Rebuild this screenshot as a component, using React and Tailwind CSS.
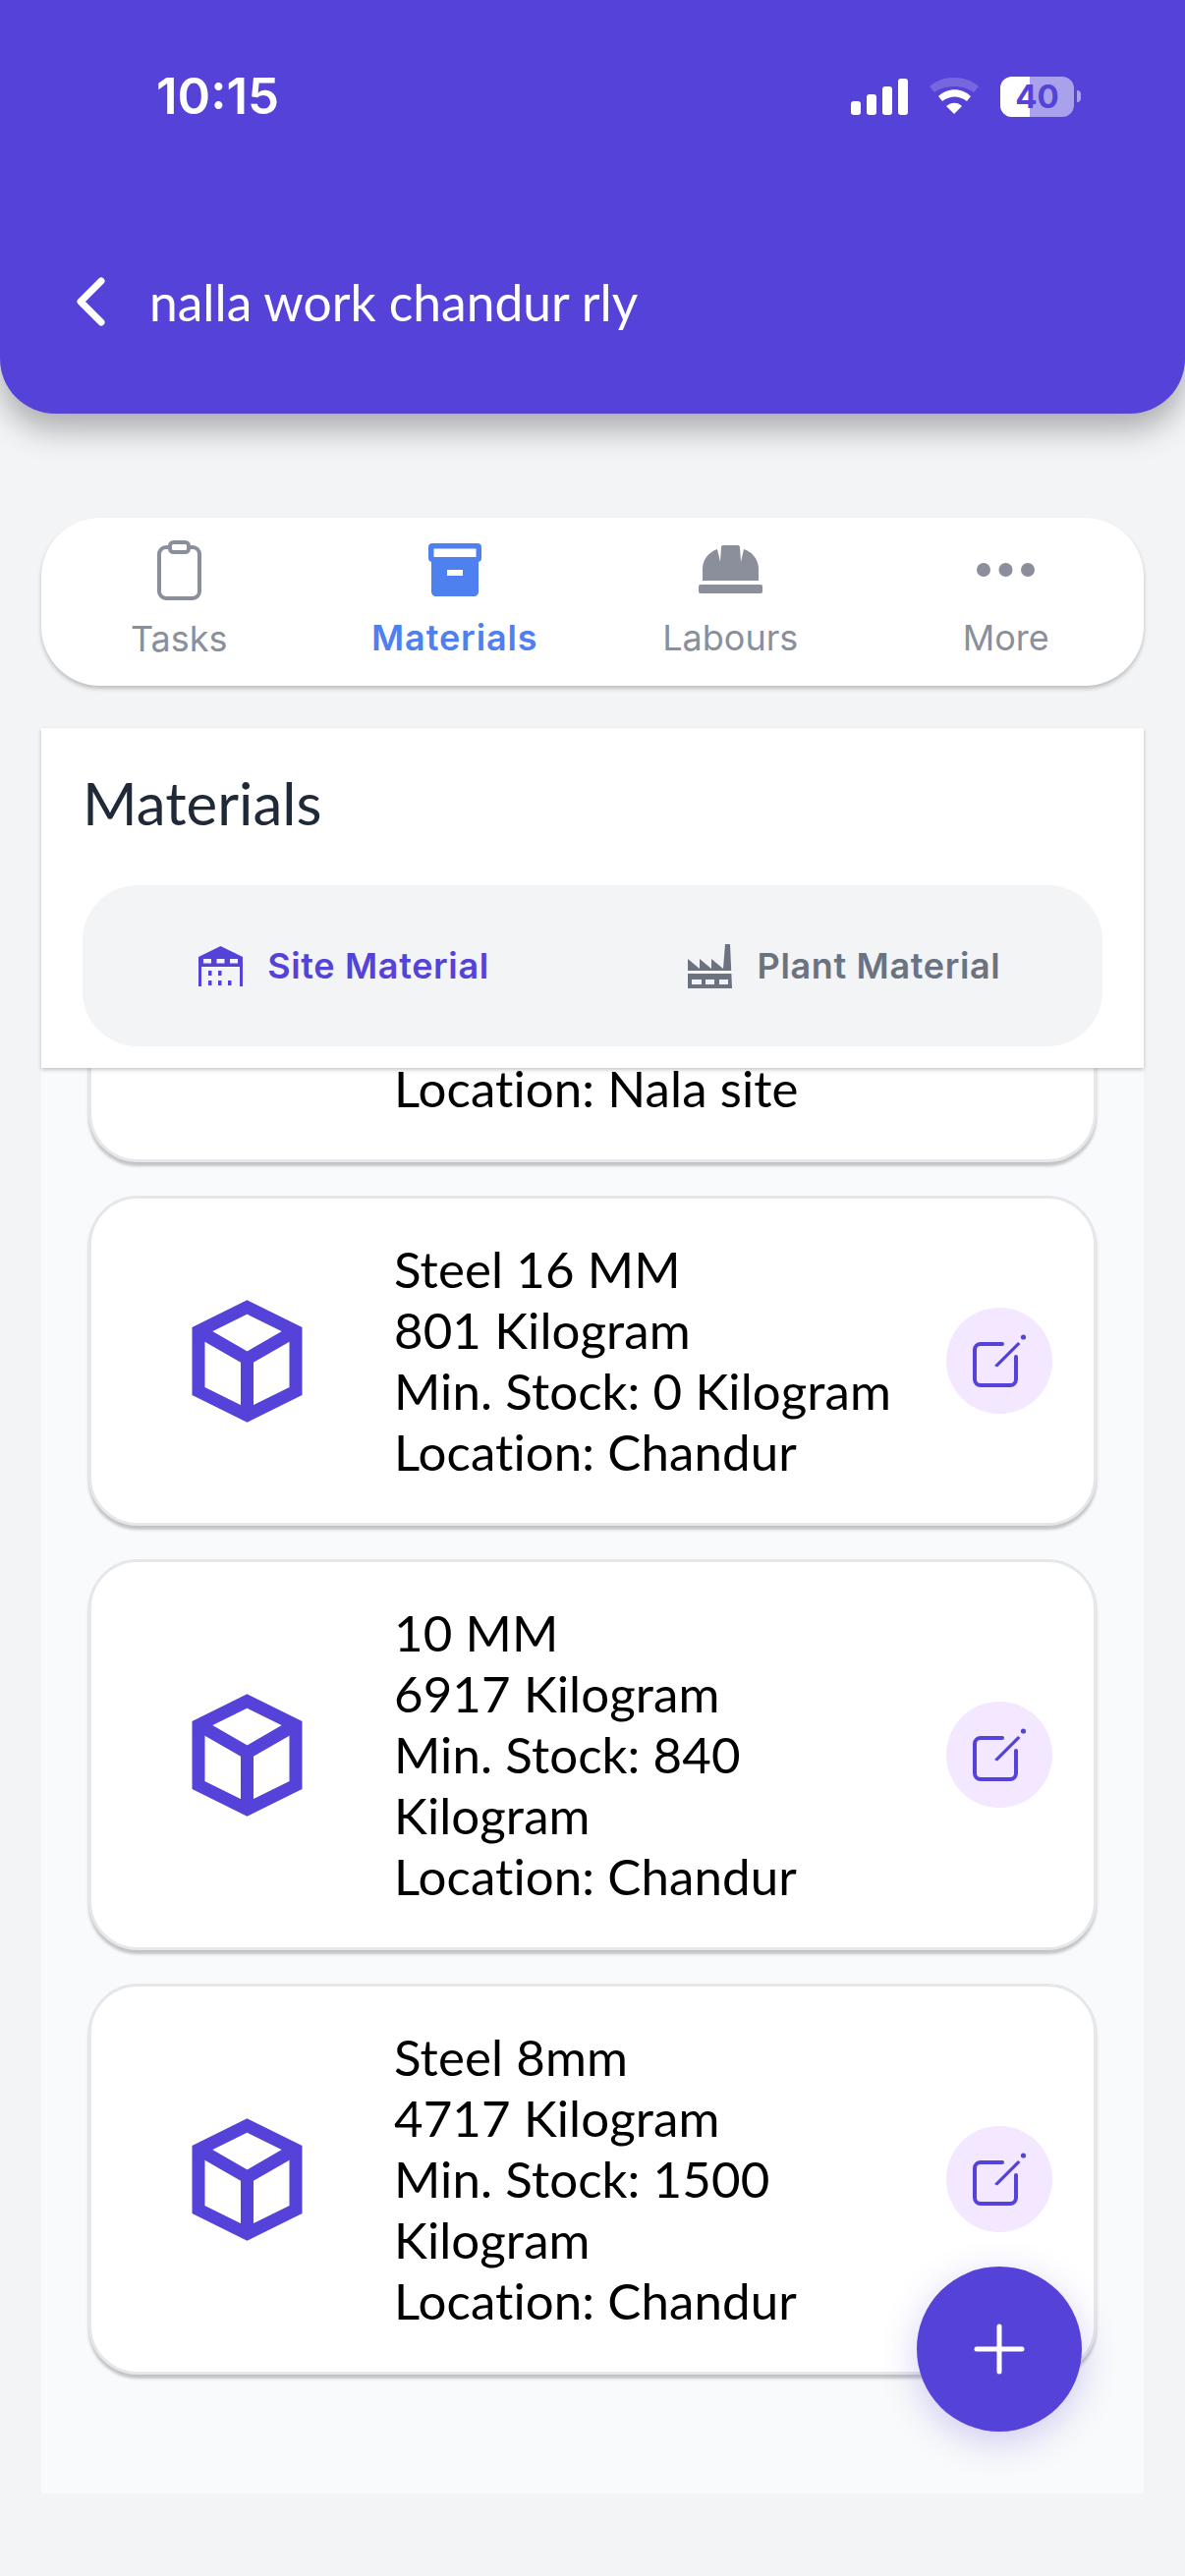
const materials = [
  { name: "Steel 16 MM", qty: "801 Kilogram", min: "Min. Stock: 0 Kilogram", location: "Location: Chandur" },
  { name: "10 MM", qty: "6917 Kilogram", min: "Min. Stock: 840 Kilogram", location: "Location: Chandur" },
  { name: "Steel 8mm", qty: "4717 Kilogram", min: "Min. Stock: 1500 Kilogram", location: "Location: Chandur" },
];

function StatusBar() {
  return (
    <div className="flex items-center justify-between pl-[159px] pr-[106px] pt-[70px]">
      <span className="font-['Inter',sans-serif] text-[51px] leading-[56px] font-semibold text-white">10:15</span>
      <div className="flex items-center">
        <svg width="58" height="37" viewBox="0 0 58 37" fill="#fff">
          <rect x="0" y="23" width="10" height="14" rx="3" />
          <rect x="16" y="16" width="10" height="21" rx="3" />
          <rect x="32" y="8" width="10" height="29" rx="3" />
          <rect x="48" y="0" width="10" height="37" rx="3" />
        </svg>
        <svg className="ml-[22px]" width="50" height="38" viewBox="0 0 50 38" fill="#fff">
          <path opacity="0.2" d="M0 9C13-3 37-3 50 9L45 15C35 7 15 7 5 15Z" />
          <path d="M9 19C18 10 33 10 42 19L38 24C30 18 21 18 13 24Z" />
          <path d="M17 29C22 24.5 29 24.5 33 29L25 37Z" />
        </svg>
        <div className="relative ml-[22px] flex h-[41px] w-[75px] items-center justify-center overflow-hidden rounded-[12px] bg-white/50">
          <div className="absolute inset-y-0 left-0 w-[30px] bg-white" />
          <span className="relative font-['Inter',sans-serif] text-[33px] leading-[41px] font-bold text-[#5542D8]">40</span>
        </div>
        <div className="ml-[3px] h-[12px] w-[4px] rounded-r-full bg-white/50" />
      </div>
    </div>
  );
}

function TasksIcon() {
  return (
    <svg width="45" height="61" viewBox="0 0 45 61" fill="none" stroke="#8A8F9B" strokeWidth="4">
      <rect x="2" y="7" width="41" height="52" rx="7" />
      <rect x="13" y="2" width="19" height="10" rx="3.5" fill="#fff" />
    </svg>
  );
}

function BoxIcon() {
  return (
    <svg width="54" height="54" viewBox="0 0 54 54" fill="#4F80EF">
      <path d="M3 16H51V49C51 52 49 54 46 54H8C5 54 3 52 3 49Z" />
      <rect x="0" y="0" width="54" height="19" rx="4" />
      <rect x="5.5" y="5.5" width="43" height="8.5" fill="#fff" />
      <rect x="19" y="27" width="16" height="6" fill="#fff" />
    </svg>
  );
}

function HelmetIcon() {
  return (
    <svg width="65" height="49" viewBox="0 0 65 49" fill="#8A8F9B">
      <path d="M4 36V24C4 15 10 7 19 4L22 17L23 2Q23 0 25 0H40Q42 0 42 2L43 17L46 4C55 7 61 15 61 24V36Z" />
      <rect x="0" y="40" width="65" height="9" rx="2" />
    </svg>
  );
}

function DotsIcon() {
  return (
    <svg width="59" height="14" viewBox="0 0 59 14" fill="#8A8F9B">
      <circle cx="7" cy="7" r="7" />
      <circle cx="29.5" cy="7" r="7" />
      <circle cx="52" cy="7" r="7" />
    </svg>
  );
}

function SiteIcon() {
  return (
    <svg width="45" height="41" viewBox="0 0 45 41" fill="#5542D8">
      <path d="M22.5 0L45 11V41H42V21H3V41H0V11Z" />
      <rect x="5" y="13" width="8" height="4.5" fill="#F3F4F6" />
      <rect x="18.5" y="13" width="8" height="4.5" fill="#F3F4F6" />
      <rect x="32" y="13" width="8" height="4.5" fill="#F3F4F6" />
      <rect x="10" y="25" width="3.5" height="5" />
      <rect x="20" y="25" width="3.5" height="5" />
      <rect x="10" y="35" width="3.5" height="5" />
      <rect x="20" y="35" width="3.5" height="5" />
      <rect x="30" y="35" width="3.5" height="5" />
    </svg>
  );
}

function FactoryIcon() {
  return (
    <svg width="45" height="45" viewBox="0 0 45 45" fill="#6B7280">
      <path d="M0 15L12 25V15L24 25V15L36 25L38 0H43L45 45H0Z" />
      <rect x="0" y="27" width="45" height="3" fill="#F3F4F6" />
      <rect x="4" y="36" width="10" height="5" fill="#F3F4F6" />
      <rect x="18" y="36" width="9" height="5" fill="#F3F4F6" />
      <rect x="32" y="36" width="9" height="5" fill="#F3F4F6" />
    </svg>
  );
}

function CubeIcon() {
  return (
    <svg className="shrink-0" width="115" height="125" viewBox="0 0 115 125" fill="none" stroke="#5542D8" strokeWidth="13">
      <path d="M57.5 7.5L107 32V93L57.5 117.5L8 93V32Z" />
      <path d="M9 32L57.5 60L106 32M57.5 60V117" />
    </svg>
  );
}

function EditButton() {
  return (
    <button className="flex h-[108px] w-[108px] shrink-0 items-center justify-center rounded-full bg-[#F3E8FF]">
      <svg width="60" height="60" viewBox="0 0 60 60" fill="none">
        <path d="M33 13H11A6 6 0 0 0 5 19V49A6 6 0 0 0 11 55H41A6 6 0 0 0 47 49V26" stroke="#5542D8" strokeWidth="4" strokeLinecap="round" />
        <path d="M25 35L49 11L51.5 13L28 36.5Z" fill="#5542D8" />
        <circle cx="54.5" cy="6" r="2.6" fill="#5542D8" />
      </svg>
    </button>
  );
}

function MaterialCard({ item }) {
  return (
    <div className="flex items-center rounded-[50px] border-[3px] border-[#E5E7EB] bg-white py-[41px] pr-[42px] pl-[101px] shadow-[0_4px_3px_rgba(0,0,0,0.22)]">
      <CubeIcon />
      <div className="ml-[92px] w-[540px] text-[51px] leading-[62px] tracking-[0.1px] text-black [font-variant-ligatures:none]">
        <p>{item.name}</p>
        <p>{item.qty}</p>
        <p>{item.min}</p>
        <p>{item.location}</p>
      </div>
      <div className="ml-auto">
        <EditButton />
      </div>
    </div>
  );
}

export default function App() {
  return (
    <div className="relative h-[2622px] w-full overflow-hidden bg-[#F3F4F6] font-['Lato',sans-serif]">
      <header className="relative z-20 h-[421px] rounded-b-[56px] bg-[#5542D8] shadow-[0_16px_32px_rgba(0,0,0,0.3)]">
        <StatusBar />
        <div className="mt-[149px] flex items-center pl-[77px]">
          <svg width="30" height="50" viewBox="0 0 30 50" fill="none" stroke="#fff" strokeWidth="7" strokeLinecap="round" strokeLinejoin="round">
            <path d="M26 4L5 25L26 46" />
          </svg>
          <h1 className="ml-[45px] text-[51.5px] leading-[64px] text-white [font-variant-ligatures:none]">nalla work chandur rly</h1>
        </div>
      </header>

      <main className="px-[42px] pt-[106px]">
        <nav className="grid h-[171px] grid-cols-4 rounded-[60px] bg-white font-['Inter',sans-serif] text-[36px] leading-[44px] text-[#8A8F9B] shadow-[0_3px_4px_rgba(0,0,0,0.22)]">
          <div className="flex flex-col items-center pt-[23px]">
            <TasksIcon />
            <span className="mt-[17px]">Tasks</span>
          </div>
          <div className="flex flex-col items-center pt-[26px]">
            <BoxIcon />
            <span className="mt-[20px] font-semibold tracking-[0.9px] text-[#4F80EF]">Materials</span>
          </div>
          <div className="flex flex-col items-center pt-[28px]">
            <HelmetIcon />
            <span className="mt-[23px]">Labours</span>
          </div>
          <div className="flex flex-col items-center pt-[46px]">
            <DotsIcon />
            <span className="mt-[40px]">More</span>
          </div>
        </nav>

        <section className="relative z-10 mt-[43px] h-[346px] bg-white px-[42px] pt-[40px] shadow-[0_2px_4px_rgba(0,0,0,0.22)]">
          <h2 className="text-[60px] leading-[72px] text-[#1F2937]">Materials</h2>
          <div className="mt-[48px] flex h-[164px] rounded-[56px] bg-[#F3F4F6] font-['Inter',sans-serif] text-[36px] font-semibold tracking-[0.65px]">
            <div className="flex w-1/2 items-center justify-center gap-[25px] pl-[13px] text-[#5542D8]">
              <SiteIcon />
              <span>Site Material</span>
            </div>
            <div className="flex w-1/2 items-center justify-center gap-[26px] pr-[7px] text-[#6B7280]">
              <FactoryIcon />
              <span>Plant Material</span>
            </div>
          </div>
        </section>

        <section className="-mt-[23px] flex h-[1474px] flex-col gap-[34px] bg-[#F9FAFB] px-[48px]">
          <div className="rounded-b-[50px] border-[3px] border-t-0 border-[#E5E7EB] bg-white pt-[13px] pb-[41px] pl-[308px] text-[51px] leading-[62px] tracking-[0.1px] text-black shadow-[0_4px_3px_rgba(0,0,0,0.22)] [font-variant-ligatures:none]">
            Location: Nala site
          </div>
          {materials.map((item) => (
            <MaterialCard key={item.name} item={item} />
          ))}
        </section>
      </main>

      <button className="absolute top-[2307px] right-[105px] z-30 flex h-[168px] w-[168px] items-center justify-center rounded-full bg-[#5542D8] shadow-[0_10px_36px_rgba(85,66,216,0.25)]">
        <svg width="52" height="52" viewBox="0 0 52 52" stroke="#fff" strokeWidth="5" strokeLinecap="round">
          <path d="M26 3V49M3 26H49" />
        </svg>
      </button>
    </div>
  );
}
